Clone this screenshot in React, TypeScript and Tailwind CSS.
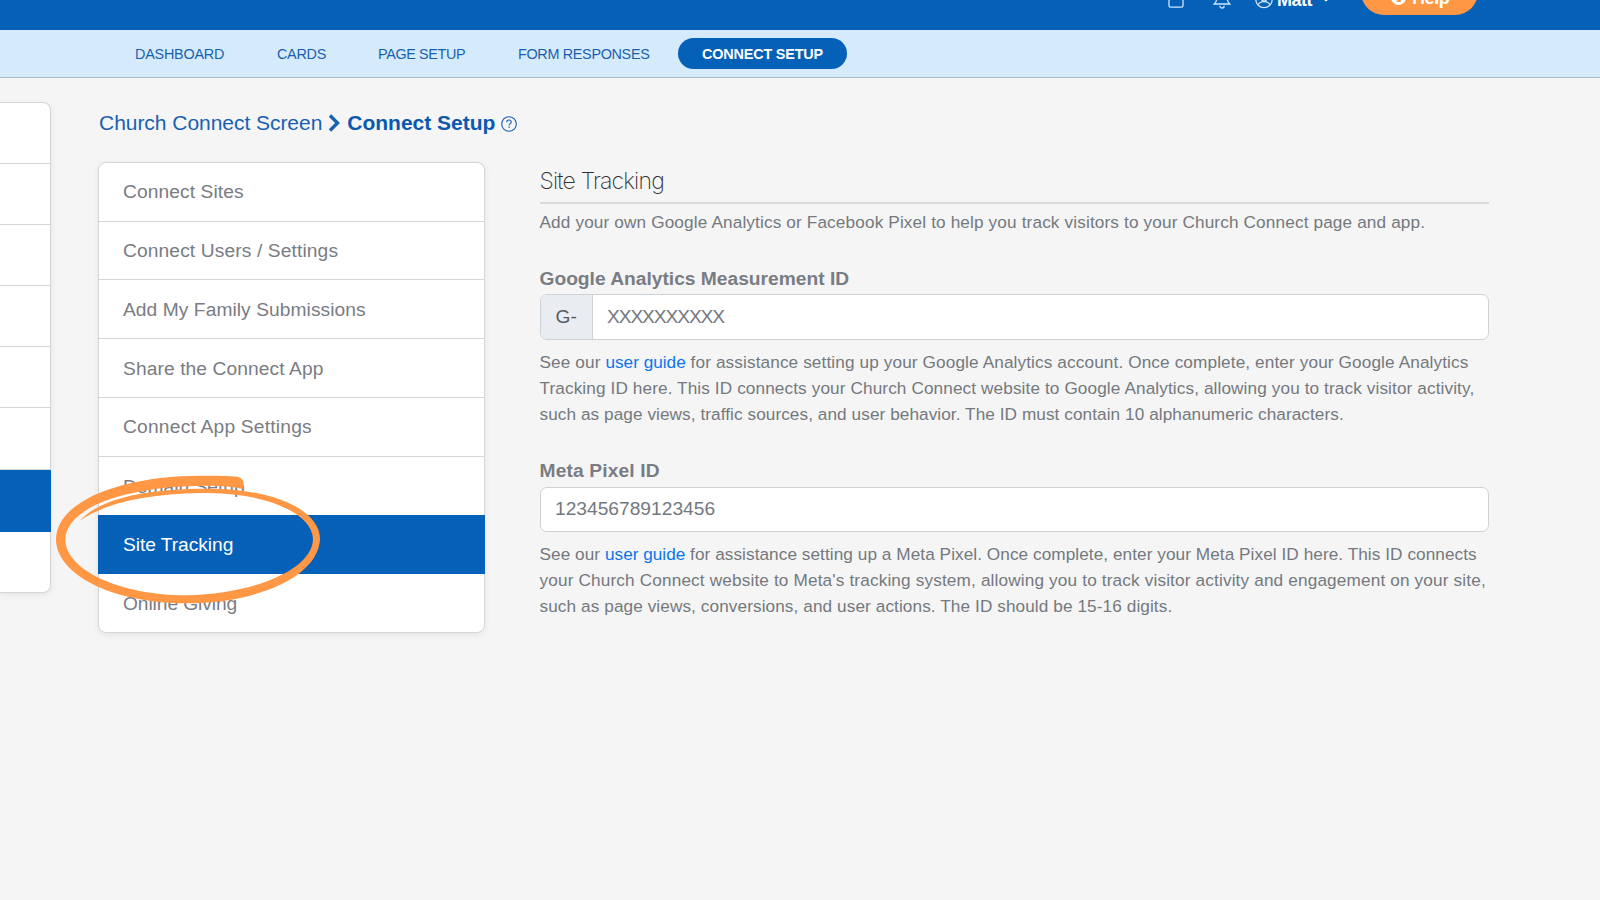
import type { ReactNode } from "react";

const NAV = [
  { label: "DASHBOARD", box: "w-[89px] ml-[135px] tracking-[-0.22px]" },
  { label: "CARDS", box: "w-[49px] ml-[53px] tracking-[-0.28px]" },
  { label: "PAGE SETUP", box: "w-[88px] ml-[52px] tracking-[-0.37px]" },
  { label: "FORM RESPONSES", box: "w-[132px] ml-[52px] tracking-[-0.32px]" },
];

const MENU = [
  { label: "Connect Sites", tracking: "tracking-[0.1px]" },
  { label: "Connect Users / Settings", tracking: "tracking-[0.12px]" },
  { label: "Add My Family Submissions", tracking: "tracking-[0.07px]" },
  { label: "Share the Connect App", tracking: "tracking-[0.1px]" },
  { label: "Connect App Settings", tracking: "tracking-[0.22px]" },
  { label: "Domain Setup", tracking: "tracking-[0px]" },
  { label: "Site Tracking", tracking: "tracking-[-0.05px]", active: true },
  { label: "Online Giving", tracking: "tracking-[-0.08px]" },
];

function TopBar() {
  return (
    <header className="relative h-[30px] w-full shrink-0 overflow-hidden bg-[#0560b8] text-white">
      <svg className="absolute left-[1160px] top-0" width="180" height="16" viewBox="0 0 180 16" fill="none" stroke="#cfe6fb" strokeWidth="1.3">
        <path d="M9 -8V5.8a1.4 1.4 0 0 0 1.4 1.4h11.2a1.4 1.4 0 0 0 1.4-1.4V-8" />
        <path d="M57 -2c-.3 2.600-1.200 4.500-2.700 6h15.400c-1.500-1.500-2.400-3.400-2.700-6M59.800 5.800a2.200 2.200 0 0 0 4.400 0" />
        <circle cx="104" cy="-0.600" r="8.200" />
        <path d="M98 4.800c1.200-2.300 3.300-3.200 6-3.200s4.800.9 6 3.200M101 -2a3 3 0 0 0 6 0" />
        <path d="M163.500 -1.500L166 0.600L168.500 -1.500" stroke="#fff" strokeWidth="1.500" />
      </svg>
      <span className="absolute left-[1277px] top-[-10px] whitespace-nowrap text-[18px] font-bold leading-[20px] tracking-[-0.5px]">Matt</span>
      <div className="absolute left-[1361px] top-[-31px] flex h-[46px] w-[117px] items-end rounded-[23px] bg-[#ff9745] pl-[30px]">
        <svg className="mb-[10px]" width="15" height="15" viewBox="0 0 16 16">
          <circle cx="8" cy="8" r="8" fill="#fff" />
          <path d="M6 7h3v4.500h1.200M6 11.800h4.500M8 3.500v1.800" stroke="#ff9745" strokeWidth="2" fill="none" />
        </svg>
        <span className="mb-[7px] ml-[6px] text-[18px] font-bold leading-[20px] tracking-[-0.4px]">Help</span>
      </div>
    </header>
  );
}

function NavBar() {
  return (
    <nav className="flex h-[48px] w-full shrink-0 items-center border-b border-[#a9bccb] bg-[#d5ebfc] text-[#1a5fae]">
      {NAV.map((n) => (
        <span key={n.label} className={`whitespace-nowrap pt-[2px] text-[14.4px] ${n.box}`}>
          {n.label}
        </span>
      ))}
      <span className="ml-[28px] flex h-[31px] w-[169px] items-center justify-center rounded-full bg-[#0560b8] pt-[2px] text-[14.4px] font-bold tracking-[-0.18px] text-white">
        CONNECT SETUP
      </span>
    </nav>
  );
}

function OuterMenu() {
  return (
    <aside className="mt-[24px] flex h-[491px] w-[51px] flex-col rounded-r-[8px] border border-l-0 border-[#d3d5d8] bg-white shadow-[0_2px_6px_rgba(0,0,0,0.07)]">
      {[0, 1, 2, 3, 4, 5, 6].map((i) => (
        <div
          key={i}
          className={i === 6 ? "-mr-px h-[62px] shrink-0 bg-[#0560b8]" : "h-[61.1px] shrink-0 border-b border-[#d3d5d8]"}
        />
      ))}
    </aside>
  );
}

function Menu() {
  return (
    <div className="flex h-[471px] w-[387px] flex-col rounded-[8px] border border-[#d3d5d8] bg-white shadow-[0_2px_6px_rgba(0,0,0,0.07)]">
      {MENU.map((m, i) => (
        <div
          key={m.label}
          className={`flex h-[58.74px] shrink-0 items-center whitespace-nowrap pt-[2px] text-[19.2px] ${m.tracking} ${
            m.active
              ? "-mx-px bg-[#0560b8] pl-[25px] text-white"
              : i < 5
                ? "border-b border-[#d3d5d8] pl-[24px] text-[#797c83]"
                : "pl-[24px] text-[#797c83]"
          }`}
        >
          {m.label}
        </div>
      ))}
    </div>
  );
}

function Line({ className, children }: { className: string; children: ReactNode }) {
  return <div className={`w-max whitespace-nowrap ${className}`}>{children}</div>;
}

function Guide() {
  return <a className="tracking-[0px] text-[#0b74ee]">user guide</a>;
}

function Content() {
  return (
    <section className="ml-[54.5px] flex w-[949.5px] flex-col text-[#74797e]">
      <h2 className="mt-[2px] h-[40px] border-b-2 border-[#d9dadb] font-[Inter] text-[23px] font-extralight leading-[35px] text-[#303133]">
        <Line className="tracking-[-0.82px]">Site Tracking</Line>
      </h2>
      <p className="mt-[5px] text-[17.2px] leading-[26px]">
        <Line className="tracking-[0.138px]">
          Add your own Google Analytics or Facebook Pixel to help you track visitors to your Church Connect page and app.
        </Line>
      </p>
      <label className="mt-[30px] text-[19.2px] font-bold leading-[28px] text-[#797c83]">
        <Line className="tracking-[0px]">Google Analytics Measurement ID</Line>
      </label>
      <div className="mt-px flex h-[46px] rounded-[7px] border border-[#cfd2d5] bg-white text-[19.2px]">
        <span className="flex w-[52.5px] items-center justify-center rounded-l-[6px] border-r border-[#cfd2d5] bg-[#e9edf1] text-[#565b60]">G-</span>
        <span className="flex items-center pl-[14px] tracking-[-1.1px]">XXXXXXXXXX</span>
      </div>
      <div className="mt-[9px] text-[17.2px] leading-[26px]">
        <Line className="tracking-[0.118px]">
          See our <Guide /> for assistance setting up your Google Analytics account. Once complete, enter your Google Analytics
        </Line>
        <Line className="tracking-[0.108px]">
          Tracking ID here. This ID connects your Church Connect website to Google Analytics, allowing you to track visitor activity,
        </Line>
        <Line className="tracking-[0.07px]">
          such as page views, traffic sources, and user behavior. The ID must contain 10 alphanumeric characters.
        </Line>
      </div>
      <label className="mt-[30px] text-[19.2px] font-bold leading-[28px] text-[#797c83]">
        <Line className="tracking-[0.15px]">Meta Pixel ID</Line>
      </label>
      <div className="mt-[2px] flex h-[45px] items-center rounded-[7px] border border-[#cfd2d5] bg-white pl-[14.5px] text-[19.2px]">
        123456789123456
      </div>
      <div className="mt-[9px] text-[17.2px] leading-[26px]">
        <Line className="tracking-[0.063px]">
          See our <Guide /> for assistance setting up a Meta Pixel. Once complete, enter your Meta Pixel ID here. This ID connects
        </Line>
        <Line className="tracking-[0.15px]">
          your Church Connect website to Meta's tracking system, allowing you to track visitor activity and engagement on your site,
        </Line>
        <Line className="tracking-[0.09px]">
          such as page views, conversions, and user actions. The ID should be 15-16 digits.
        </Line>
      </div>
    </section>
  );
}

function Highlight() {
  return (
    <svg className="absolute left-0 top-[440px]" width="340" height="220" viewBox="0 0 1020 660" fill="#ff9745">
      <path
        fillRule="evenodd"
        d="M240 242C300 175 440 145 625 146C820 146 960 210 960 297C956 410 770 490 560 490C330 490 168 400 168 298C170 180 370 106 610 107C650 107 690 107 712 110C730 114 734 128 728 147C690 138 640 136 590 138C370 142 196 205 196 300C198 390 360 466 560 466C760 462 937 390 939 297C937 220 800 160 625 159C470 160 330 180 240 242Z"
      />
    </svg>
  );
}

export default function App() {
  return (
    <div className="relative flex h-[900px] w-[1600px] flex-col overflow-hidden bg-[#f5f5f5] font-['Liberation_Sans',Arial,sans-serif]">
      <TopBar />
      <NavBar />
      <main className="flex items-start">
        <OuterMenu />
        <div className="ml-[47px] flex flex-col">
          <div className="mt-[30px] flex h-[30px] items-center whitespace-nowrap pl-px text-[21px] text-[#1761b3]">
            <span className="tracking-[-0.04px]">Church Connect Screen</span>
            <svg className="ml-[6px]" width="12" height="18" viewBox="0 0 12 18" fill="none" stroke="currentColor" strokeWidth="3.4">
              <path d="M2 1.500L9.500 9L2 16.500" />
            </svg>
            <span className="ml-[7px] font-bold text-[#0a59b0]">Connect Setup</span>
            <svg className="ml-[6px] mt-[2px]" width="16" height="16" viewBox="0 0 16 16" fill="none" stroke="currentColor" strokeWidth="1.100">
              <circle cx="8" cy="8" r="7.300" />
              <path d="M5.700 6.200C5.700 4.700 6.700 4 8 4s2.300.8 2.300 2c0 1.600-2.200 1.700-2.200 3.400M8.100 10.600v1.300" />
            </svg>
          </div>
          <div className="mt-[24px] flex">
            <Menu />
            <Content />
          </div>
        </div>
      </main>
      <Highlight />
    </div>
  );
}
